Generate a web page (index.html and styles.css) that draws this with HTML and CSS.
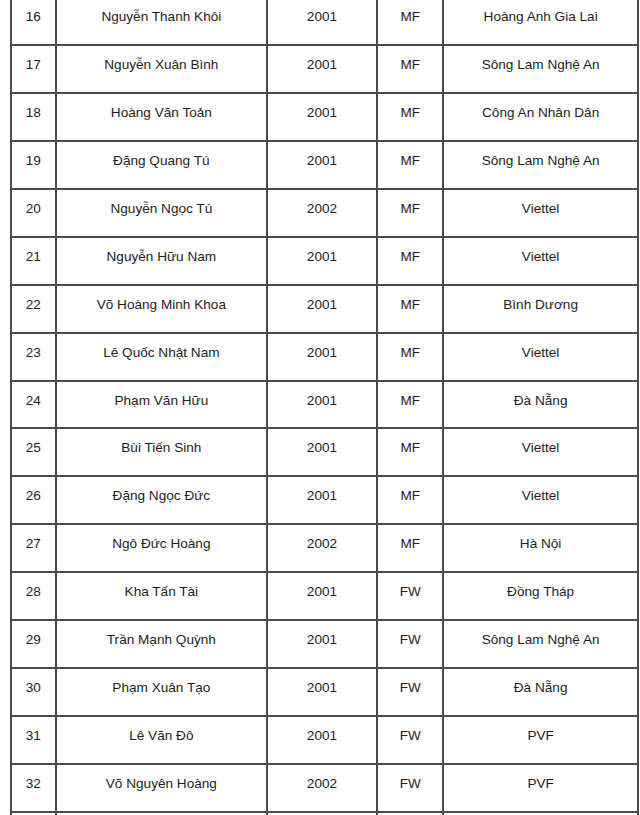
FILE: index.html
```html
<!DOCTYPE html>
<html lang="vi">
<head>
<meta charset="utf-8">
<link rel="stylesheet" href="styles.css">
</head>
<body>
<table class="roster">
<colgroup>
<col class="c-no"><col class="c-name"><col class="c-year"><col class="c-pos"><col class="c-club">
</colgroup>
<tbody>
<tr><td>16</td><td>Nguyễn Thanh Khôi</td><td>2001</td><td>MF</td><td>Hoàng Anh Gia Lai</td></tr>
<tr><td>17</td><td>Nguyễn Xuân Bình</td><td>2001</td><td>MF</td><td>Sông Lam Nghệ An</td></tr>
<tr><td>18</td><td>Hoàng Văn Toản</td><td>2001</td><td>MF</td><td>Công An Nhân Dân</td></tr>
<tr><td>19</td><td>Đặng Quang Tú</td><td>2001</td><td>MF</td><td>Sông Lam Nghệ An</td></tr>
<tr><td>20</td><td>Nguyễn Ngọc Tú</td><td>2002</td><td>MF</td><td>Viettel</td></tr>
<tr><td>21</td><td>Nguyễn Hữu Nam</td><td>2001</td><td>MF</td><td>Viettel</td></tr>
<tr><td>22</td><td>Võ Hoàng Minh Khoa</td><td>2001</td><td>MF</td><td>Bình Dương</td></tr>
<tr><td>23</td><td>Lê Quốc Nhật Nam</td><td>2001</td><td>MF</td><td>Viettel</td></tr>
<tr><td>24</td><td>Phạm Văn Hữu</td><td>2001</td><td>MF</td><td>Đà Nẵng</td></tr>
<tr><td>25</td><td>Bùi Tiến Sinh</td><td>2001</td><td>MF</td><td>Viettel</td></tr>
<tr><td>26</td><td>Đặng Ngọc Đức</td><td>2001</td><td>MF</td><td>Viettel</td></tr>
<tr><td>27</td><td>Ngô Đức Hoàng</td><td>2002</td><td>MF</td><td>Hà Nội</td></tr>
<tr><td>28</td><td>Kha Tấn Tài</td><td>2001</td><td>FW</td><td>Đồng Tháp</td></tr>
<tr><td>29</td><td>Trần Mạnh Quỳnh</td><td>2001</td><td>FW</td><td>Sông Lam Nghệ An</td></tr>
<tr><td>30</td><td>Phạm Xuân Tạo</td><td>2001</td><td>FW</td><td>Đà Nẵng</td></tr>
<tr><td>31</td><td>Lê Văn Đô</td><td>2001</td><td>FW</td><td>PVF</td></tr>
<tr><td>32</td><td>Võ Nguyên Hoàng</td><td>2002</td><td>FW</td><td>PVF</td></tr>
<tr><td>&nbsp;</td><td>&nbsp;</td><td>&nbsp;</td><td>&nbsp;</td><td>&nbsp;</td></tr>
</tbody>
</table>
</body>
</html>
```
FILE: styles.css
```css
html, body {
  margin: 0;
  padding: 0;
  background: #ffffff;
  overflow: hidden;
}
body {
  font-family: "Liberation Sans", Arial, sans-serif;
  font-size: 13.6px;
  color: #1e1e1e;
}
.roster {
  border-collapse: collapse;
  table-layout: fixed;
  width: 627.5px;
  margin: -3.6px 0 0 9.5px;
}
.c-no { width: 45.5px; }
.c-name { width: 210.7px; }
.c-year { width: 110.6px; }
.c-pos { width: 66px; }
.c-club { width: 194.7px; }
.roster td {
  border: 2px solid #4a4a4a;
  text-align: center;
  vertical-align: top;
  line-height: 17px;
  padding: 10px 4px 0 4px;
  height: 35.9px;
  box-sizing: content-box;
  white-space: nowrap;
}
```
